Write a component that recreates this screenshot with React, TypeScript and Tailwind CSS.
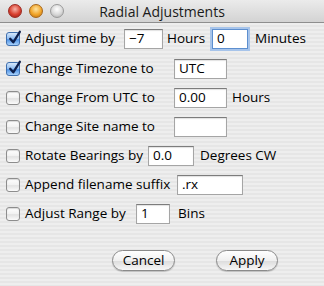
import React from 'react';

function Checkbox({ checked }: { checked?: boolean }) {
  return (
    <span
      className={`relative h-[14px] w-[14px] flex-shrink-0 rounded-[3px] border ${
        checked
          ? 'border-[#3f6fae] bg-[linear-gradient(to_bottom,#d6e8fb,#8bbaf0_50%,#4f93e6_55%,#a9d2fb)]'
          : 'border-[#8d8d8d] bg-[linear-gradient(to_bottom,#ffffff,#f1f1f1_50%,#e2e2e2_55%,#fbfbfb)] shadow-[inset_0_1px_1px_rgba(0,0,0,0.15)]'
      }`}
    >
      {checked && (
        <svg viewBox="0 0 16 16" className="absolute -top-[3px] left-[1px] h-[15px] w-[14px]">
          <path d="M2.5 9.5 L6 13.5 L13.5 1.5" fill="none" stroke="#0d1e4a" strokeWidth="2.6" strokeLinecap="round" strokeLinejoin="round" />
        </svg>
      )}
    </span>
  );
}

function Field({ value, w, focused }: { value?: string; w: string; focused?: boolean }) {
  return (
    <span
      className={`flex h-[20px] items-center bg-white px-[4px] ${w} ${
        focused
          ? 'border border-[#5d8fcf] shadow-[0_0_0_2px_#a7c4ea]'
          : 'border border-[#a5a5a5] border-t-[#7c7c7c] shadow-[inset_0_1px_1px_rgba(0,0,0,0.12)]'
      }`}
    >
      {value}
    </span>
  );
}

function Light({ color }: { color: string }) {
  return <span className={`h-[14px] w-[14px] rounded-full border ${color}`} />;
}

function PillButton({ label, w }: { label: string; w: string }) {
  return (
    <button
      className={`flex h-[21px] ${w} items-center justify-center rounded-full border border-[#8a8a8a] bg-[linear-gradient(to_bottom,#ffffff,#f0f0f0_50%,#dedede_55%,#f7f7f7)] text-[13.5px] shadow-[0_1px_1px_rgba(0,0,0,0.2)]`}
    >
      {label}
    </button>
  );
}

export default function App() {
  return (
    <div className="flex h-[286px] w-[324px] flex-col overflow-hidden font-['Open_Sans',sans-serif] text-[13.5px] text-black">
      <div className="relative flex h-[23px] flex-shrink-0 items-center border-b border-[#8e8e8e] bg-[linear-gradient(to_bottom,#ebebeb,#d3d3d3)]">
        <div className="flex items-center gap-[7px] pl-[8px]">
          <Light color="border-[#9c2a22] bg-[radial-gradient(circle_at_50%_35%,#f6b3a8,#d9402f_55%,#8e1d15)]" />
          <Light color="border-[#a7661a] bg-[radial-gradient(circle_at_50%_35%,#fde3a0,#f1a52a_55%,#b56c10)]" />
          <Light color="border-[#9a9a9a] bg-[radial-gradient(circle_at_50%_35%,#ffffff,#d8d8d8_55%,#a8a8a8)]" />
        </div>
        <span className="absolute left-0 right-0 text-center text-[14px] text-[#1a1a1a]">Radial Adjustments</span>
      </div>

      <div className="flex flex-1 flex-col bg-[repeating-linear-gradient(to_bottom,#eeeeee_0px,#eeeeee_2px,#e6e6e6_2px,#e6e6e6_4px)]">
        <div className="flex h-[31px] items-center pl-[6px]">
          <Checkbox checked />
          <span className="w-[104px] pl-[5px]">Adjust time by</span>
          <Field value="−7" w="w-[39px]" />
          <span className="ml-[4px] w-[45px]">Hours</span>
          <Field value="0" w="w-[36px]" focused />
          <span className="ml-[7px]">Minutes</span>
        </div>
        <div className="flex h-[29px] items-center pl-[6px]">
          <Checkbox checked />
          <span className="w-[154px] pl-[5px]">Change Timezone to</span>
          <Field value="UTC" w="w-[53px]" />
        </div>
        <div className="flex h-[29px] items-center pl-[6px]">
          <Checkbox />
          <span className="w-[154px] pl-[5px]">Change From UTC to</span>
          <Field value="0.00" w="w-[53px]" />
          <span className="ml-[5px]">Hours</span>
        </div>
        <div className="flex h-[29px] items-center pl-[6px]">
          <Checkbox />
          <span className="w-[154px] pl-[5px]">Change Site name to</span>
          <Field w="w-[53px]" />
        </div>
        <div className="flex h-[29px] items-center pl-[6px]">
          <Checkbox />
          <span className="w-[128px] pl-[5px]">Rotate Bearings by</span>
          <Field value="0.0" w="w-[46px]" />
          <span className="ml-[6px]">Degrees CW</span>
        </div>
        <div className="flex h-[29px] items-center pl-[6px]">
          <Checkbox />
          <span className="w-[157px] pl-[5px]">Append filename suffix</span>
          <Field value=".rx" w="w-[66px]" />
        </div>
        <div className="flex h-[29px] items-center pl-[6px]">
          <Checkbox />
          <span className="w-[116px] pl-[5px]">Adjust Range by</span>
          <Field value="1" w="w-[34px]" />
          <span className="ml-[8px]">Bins</span>
        </div>

        <div className="mt-[22px] flex gap-[41px] pl-[112px]">
          <PillButton label="Cancel" w="w-[63px]" />
          <PillButton label="Apply" w="w-[62px]" />
        </div>
      </div>
    </div>
  );
}
